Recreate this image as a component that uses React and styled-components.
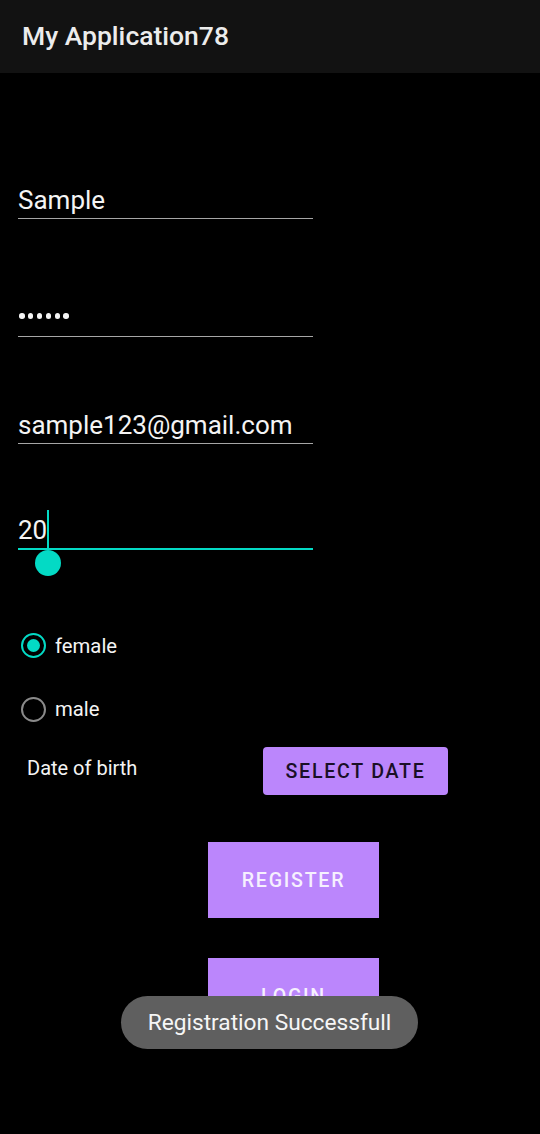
import styled, { createGlobalStyle } from 'styled-components'

const GlobalStyle = createGlobalStyle`
  html, body {
    margin: 0;
    padding: 0;
    background: #000;
  }
  body {
    font-family: Roboto, 'Noto Sans', sans-serif;
    color: #fff;
  }
`

const Screen = styled.div`
  position: relative;
  width: 540px;
  height: 1134px;
  background: #000;
  overflow: hidden;
`

const AppBar = styled.header`
  height: 73px;
  background: #121212;
  display: flex;
  align-items: center;
  padding-left: 22px;
  box-sizing: border-box;
  font-size: 26.5px;
  font-weight: 500;
  color: #ececec;
  padding-bottom: 2px;
`

const Form = styled.div`
  display: flex;
  flex-direction: column;
`

const Field = styled.div`
  position: relative;
  margin-left: 18px;
  width: 295px;
  margin-top: ${p => p.$top}px;
  padding-bottom: 3px;
  border-bottom: ${p => (p.$focused ? '2px solid #03dac5' : '1px solid #a6a6a6')};
  font-size: 26px;
  line-height: 30px;
  color: #f4f4f4;
`

const Dots = styled.div`
  display: flex;
  align-items: center;
  gap: 3.4px;
  height: 30px;
  padding-bottom: 4px;
  box-sizing: border-box;
  padding-left: 1px;
`

const Dot = styled.span`
  width: 5.5px;
  height: 5.5px;
  border-radius: 50%;
  background: #f4f4f4;
`

const Cursor = styled.span`
  position: absolute;
  left: 29px;
  top: -5px;
  width: 2px;
  height: 38px;
  background: #03dac5;
`

const Handle = styled.span`
  position: absolute;
  left: 17px;
  bottom: -28px;
  width: 26px;
  height: 26px;
  border-radius: 50%;
  background: #03dac5;
`

const RadioGroup = styled.div`
  display: flex;
  flex-direction: column;
  margin-top: 64px;
`

const RadioRow = styled.label`
  display: flex;
  align-items: center;
  height: 63.5px;
  padding-left: 21px;
  gap: 9px;
  font-size: 20.3px;
  color: #f4f4f4;
`

const RadioCircle = styled.span`
  width: 25px;
  height: 25px;
  box-sizing: border-box;
  border-radius: 50%;
  border: 2.6px solid ${p => (p.$checked ? '#03dac5' : '#8a8a8a')};
  display: flex;
  align-items: center;
  justify-content: center;
  &::after {
    content: '';
    display: ${p => (p.$checked ? 'block' : 'none')};
    width: 13px;
    height: 13px;
    border-radius: 50%;
    background: #03dac5;
  }
`

const DateRow = styled.div`
  display: flex;
  align-items: flex-start;
  margin-top: 6px;
`

const DateLabel = styled.div`
  width: 263px;
  flex-shrink: 0;
  padding-left: 27px;
  box-sizing: border-box;
  font-size: 20px;
  line-height: 24px;
  margin-top: 9px;
  color: #f4f4f4;
`

const Button = styled.button`
  border: none;
  background: #bb86fc;
  font-family: Roboto, 'Noto Sans', sans-serif;
  font-size: 19.6px;
  font-weight: 500;
  letter-spacing: 1.75px;
  text-transform: uppercase;
  padding: 0;
  display: flex;
  align-items: center;
  justify-content: center;
  color: ${p => (p.$dark ? '#1a0f26' : '#f6f0fe')};
  width: ${p => p.$w}px;
  height: ${p => p.$h}px;
  border-radius: ${p => p.$radius || 0}px;
  margin-left: ${p => p.$left || 0}px;
  margin-top: ${p => p.$top || 0}px;
`

const Toast = styled.div`
  position: absolute;
  left: 121px;
  top: 996px;
  width: 297px;
  height: 53px;
  border-radius: 27px;
  background: #5f5f5f;
  display: flex;
  align-items: center;
  justify-content: center;
  font-size: 22.7px;
  color: #f6f6f6;
`

const App = () => (
  <Screen>
    <GlobalStyle />
    <AppBar>My Application78</AppBar>
    <Form>
      <Field $top={112}>Sample</Field>
      <Field $top={84}>
        <Dots>
          {[0, 1, 2, 3, 4, 5].map(i => (
            <Dot key={i} />
          ))}
        </Dots>
      </Field>
      <Field $top={73}>sample123@gmail.com</Field>
      <Field $top={71} $focused>
        20
        <Cursor />
        <Handle />
      </Field>
      <RadioGroup>
        <RadioRow>
          <RadioCircle $checked />
          female
        </RadioRow>
        <RadioRow>
          <RadioCircle />
          male
        </RadioRow>
      </RadioGroup>
      <DateRow>
        <DateLabel>Date of birth</DateLabel>
        <Button $dark $w={185} $h={48} $radius={4}>
          Select Date
        </Button>
      </DateRow>
      <Button $w={171} $h={76} $left={208} $top={47}>
        Register
      </Button>
      <Button $w={171} $h={76} $left={208} $top={40}>
        Login
      </Button>
    </Form>
    <Toast>Registration Successfull</Toast>
  </Screen>
)

export default App
